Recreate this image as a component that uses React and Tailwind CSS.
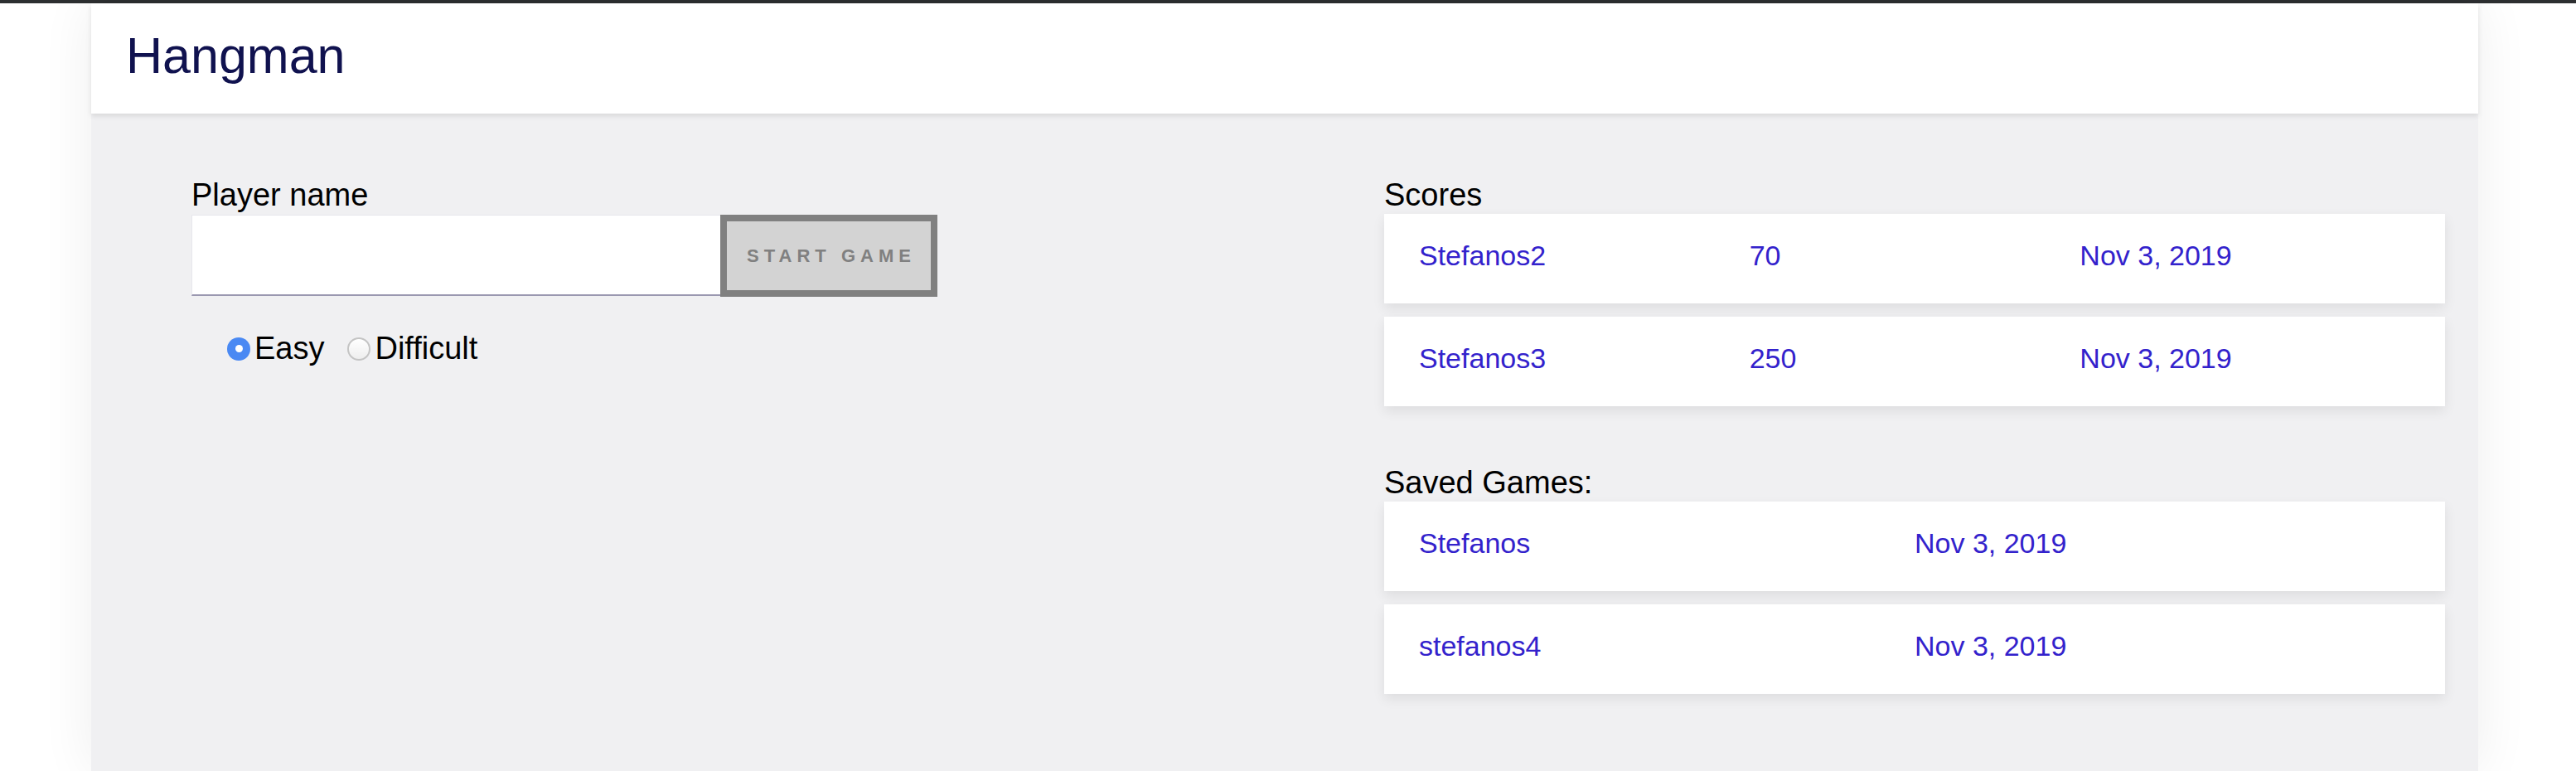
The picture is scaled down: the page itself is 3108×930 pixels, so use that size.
const scores = [
  { name: "Stefanos2", score: 70, date: "Nov 3, 2019" },
  { name: "Stefanos3", score: 250, date: "Nov 3, 2019" },
];

const savedGames = [
  { name: "Stefanos", date: "Nov 3, 2019" },
  { name: "stefanos4", date: "Nov 3, 2019" },
];

const font = { fontFamily: '"Liberation Sans", Arial, sans-serif' };

const Radio = ({ checked, label }) => (
  <label className="flex items-center">
    {checked ? (
      <span className="w-[28px] h-[28px] rounded-full bg-[#4a89f3] flex items-center justify-center">
        <span className="w-[9px] h-[9px] rounded-full bg-white"></span>
      </span>
    ) : (
      <span className="w-[28px] h-[28px] rounded-full bg-gradient-to-b from-white to-[#eeeeee] border-2 border-[#c4c4c4]"></span>
    )}
    <span className="ml-[5px] text-[38px] leading-[45px] text-black">{label}</span>
  </label>
);

const Card = ({ cols, children }) => (
  <div
    className={`bg-white h-[108px] pt-[30px] pl-[42px] pr-[42px] shadow-[0_6px_14px_rgba(0,0,0,0.08)] grid ${
      cols === 3 ? "grid-cols-3" : "grid-cols-2"
    } text-[34px] leading-[40px] text-[#3322cc]`}>
    {children}
  </div>
);

export default function App() {
  return (
    <div className="min-h-[930px] bg-white overflow-hidden" style={font}>
      <div className="h-[4px] bg-[#2d2f31]"></div>
      <div className="ml-[110px] w-[2880px] min-h-[926px] bg-[#f0f0f2] shadow-[0_0_60px_rgba(0,0,0,0.07)]">
        <header className="h-[133px] bg-white pl-[42px] pt-[33px] shadow-[0_3px_6px_rgba(0,0,0,0.1)] relative">
          <h1 className="text-[61px] leading-[60px] text-[#10124f]">Hangman</h1>
        </header>

        <div className="flex pl-[121px] pr-[40px] pt-[76px]">
          {/* left column */}
          <div className="w-[1439px]">
            <div className="text-[38px] leading-[45px] text-black">Player name</div>
            <div className="flex mt-[1px]">
              <input
                type="text"
                className="w-[638px] h-[98px] bg-white border-t border-l border-[#e6e6ec] border-b-2 border-b-[#9a98b0] outline-none px-4 text-[34px]"
              />
              <button className="w-[262px] h-[99px] border-[8px] border-[#808080] bg-[#d3d3d3] text-[#808080] font-bold text-[22px] tracking-[6px] pl-[6px]">
                START GAME
              </button>
            </div>
            <div className="flex items-center gap-[28px] mt-[40px] ml-[43px]">
              <Radio checked label="Easy" />
              <Radio label="Difficult" />
            </div>
          </div>

          {/* right column */}
          <div className="flex-1">
            <div className="text-[38px] leading-[45px] text-black">Scores</div>
            <div className="flex flex-col gap-[16px]">
              {scores.map((s) => (
                <Card key={s.name} cols={3}>
                  <span>{s.name}</span>
                  <span>{s.score}</span>
                  <span>{s.date}</span>
                </Card>
              ))}
            </div>

            <div className="mt-[70px] text-[38px] leading-[45px] text-black">Saved Games:</div>
            <div className="flex flex-col gap-[16px]">
              {savedGames.map((g) => (
                <Card key={g.name} cols={2}>
                  <span>{g.name}</span>
                  <span>{g.date}</span>
                </Card>
              ))}
            </div>
          </div>
        </div>
      </div>
    </div>
  );
}
